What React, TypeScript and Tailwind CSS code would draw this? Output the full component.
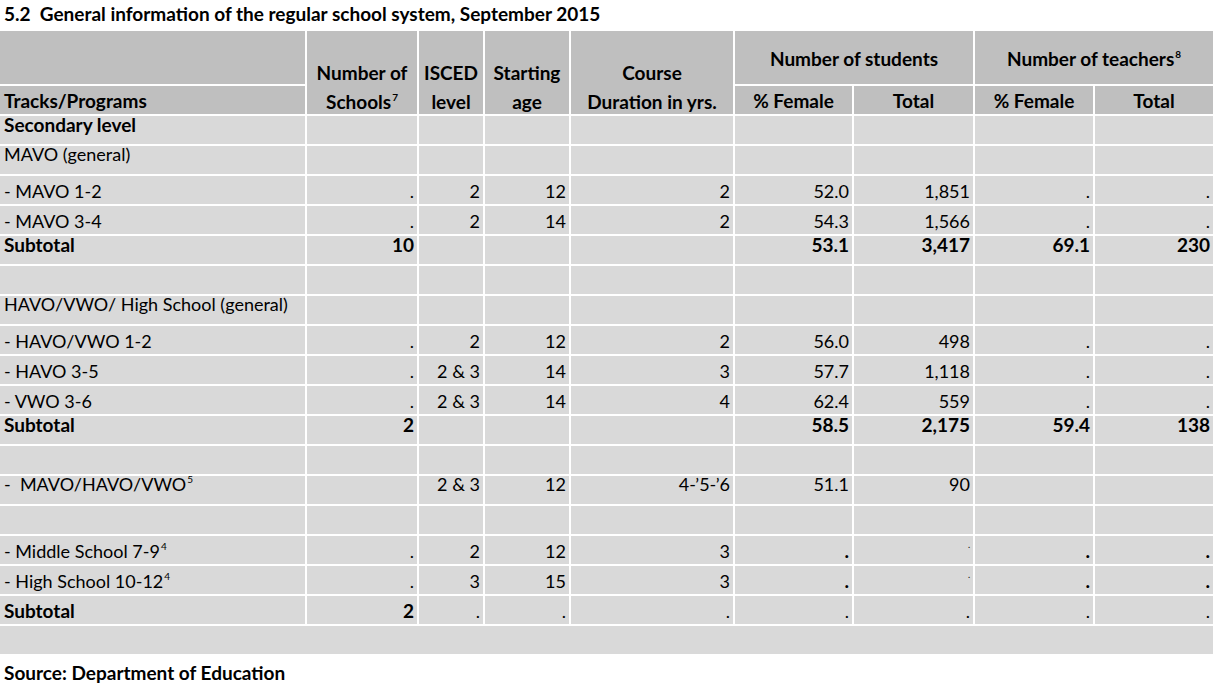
import React from "react";

type Align = "top" | "bottom";

const BODY = "bg-[#d9d9d9]";
const HEAD = "bg-[#bfbfbf]";

function Sup({ children }: { children: React.ReactNode }) {
  return (
    <span className="relative top-[-8px] text-[10px] leading-none ml-[1px]">{children}</span>
  );
}

function Row({
  cells,
  align,
  bold,
}: {
  cells: React.ReactNode[];
  align: Align;
  bold?: boolean;
}) {
  const base =
    align === "top"
      ? "items-start leading-[17px]"
      : "items-end pb-[3px] leading-[20px]";
  return (
    <>
      {cells.map((c, i) => (
        <div
          key={i}
          className={`${BODY} flex whitespace-nowrap ${base} ${
            i === 0 ? "justify-start pl-[4px]" : "justify-end pr-[3px]"
          } ${bold ? "font-bold text-[19px]" : "font-normal text-[18px]"}`}
        >
          {c}
        </div>
      ))}
    </>
  );
}

const E = "";
const empty = [E, E, E, E, E, E, E, E, E];

const TinyDot = () => (
  <span className="self-start pt-[4px] text-[9px] leading-[9px]">.</span>
);
const BoldDot = () => <span className="font-bold text-[19px]">.</span>;

function HeadTwoLine({ a, b }: { a: React.ReactNode; b: React.ReactNode }) {
  return (
    <div
      className={`${HEAD} row-span-2 flex flex-col items-center justify-end font-bold whitespace-nowrap`}
    >
      <div className="leading-[24px] mb-[5px]">{a}</div>
      <div className="leading-[24px]">{b}</div>
    </div>
  );
}

export default function App() {
  return (
    <div className="w-[1215px] h-[687px] bg-white text-black font-['Lato',sans-serif] text-[19px] overflow-hidden">
      <div className="h-[31px] pl-[4px] pt-[2px] font-bold leading-[24px] whitespace-nowrap">
        5.2&nbsp; General information of the regular school system, September 2015
      </div>
      <div className="grid w-[1213px] grid-cols-[305px_110px_64px_84px_162px_117px_119px_118px_118px] grid-rows-[53px_repeat(19,28px)] gap-[2px] bg-white">
        {/* header row A */}
        <div className={HEAD}></div>
        <HeadTwoLine a="Number of" b={<span>Schools<Sup>7</Sup></span>} />
        <HeadTwoLine a="ISCED" b="level" />
        <HeadTwoLine a="Starting" b="age" />
        <HeadTwoLine a="Course" b="Duration in yrs." />
        <div
          className={`${HEAD} col-span-2 flex items-center justify-center font-bold whitespace-nowrap pt-[3px]`}
        >
          Number of students
        </div>
        <div
          className={`${HEAD} col-span-2 flex items-center justify-center font-bold whitespace-nowrap pt-[3px]`}
        >
          <span>
            Number of teachers<Sup>8</Sup>
          </span>
        </div>
        {/* header row B */}
        <div
          className={`${HEAD} flex items-end pl-[4px] pb-[1px] font-bold leading-[24px] whitespace-nowrap`}
        >
          Tracks/Programs
        </div>
        <div className={`${HEAD} flex items-end justify-center pb-[1px] font-bold leading-[24px]`}>
          % Female
        </div>
        <div className={`${HEAD} flex items-end justify-center pb-[1px] font-bold leading-[24px]`}>
          Total
        </div>
        <div className={`${HEAD} flex items-end justify-center pb-[1px] font-bold leading-[24px]`}>
          % Female
        </div>
        <div className={`${HEAD} flex items-end justify-center pb-[1px] font-bold leading-[24px]`}>
          Total
        </div>

        {/* body */}
        <Row align="top" bold cells={["Secondary level", E, E, E, E, E, E, E, E]} />
        <Row align="top" cells={["MAVO (general)", E, E, E, E, E, E, E, E]} />
        <Row align="bottom" cells={["- MAVO 1-2", ".", "2", "12", "2", "52.0", "1,851", ".", "."]} />
        <Row align="bottom" cells={["- MAVO 3-4", ".", "2", "14", "2", "54.3", "1,566", ".", "."]} />
        <Row align="top" bold cells={["Subtotal", "10", E, E, E, "53.1", "3,417", "69.1", "230"]} />
        <Row align="top" cells={empty} />
        <Row align="top" cells={["HAVO/VWO/ High School (general)", E, E, E, E, E, E, E, E]} />
        <Row align="bottom" cells={["- HAVO/VWO 1-2", ".", "2", "12", "2", "56.0", "498", ".", "."]} />
        <Row align="bottom" cells={["- HAVO 3-5", ".", "2 & 3", "14", "3", "57.7", "1,118", ".", "."]} />
        <Row align="bottom" cells={["- VWO 3-6", ".", "2 & 3", "14", "4", "62.4", "559", ".", "."]} />
        <Row align="top" bold cells={["Subtotal", "2", E, E, E, "58.5", "2,175", "59.4", "138"]} />
        <Row align="top" cells={empty} />
        <Row
          align="top"
          cells={[
            <span key="a">
              -&nbsp; MAVO/HAVO/VWO<Sup>5</Sup>
            </span>,
            E,
            "2 & 3",
            "12",
            "4-\u20195-\u20196",
            "51.1",
            "90",
            E,
            E,
          ]}
        />
        <Row align="top" cells={empty} />
        <Row
          align="bottom"
          cells={[
            <span key="a">
              - Middle School 7-9<Sup>4</Sup>
            </span>,
            ".",
            "2",
            "12",
            "3",
            <BoldDot key="b" />,
            <TinyDot key="c" />,
            <BoldDot key="d" />,
            <BoldDot key="e" />,
          ]}
        />
        <Row
          align="bottom"
          cells={[
            <span key="a">
              - High School 10-12<Sup>4</Sup>
            </span>,
            ".",
            "3",
            "15",
            "3",
            <BoldDot key="b" />,
            <TinyDot key="c" />,
            <BoldDot key="d" />,
            <BoldDot key="e" />,
          ]}
        />
        <Row
          align="bottom"
          cells={[
            <span key="a" className="font-bold text-[19px]">Subtotal</span>,
            <span key="b" className="font-bold text-[19px]">2</span>,
            ".",
            ".",
            ".",
            ".",
            ".",
            ".",
            ".",
          ]}
        />
        <div className={`${BODY} col-span-9`}></div>
      </div>
      <div className="pl-[4px] pt-[7px] font-bold leading-[24px] whitespace-nowrap">
        Source: Department of Education
      </div>
    </div>
  );
}
